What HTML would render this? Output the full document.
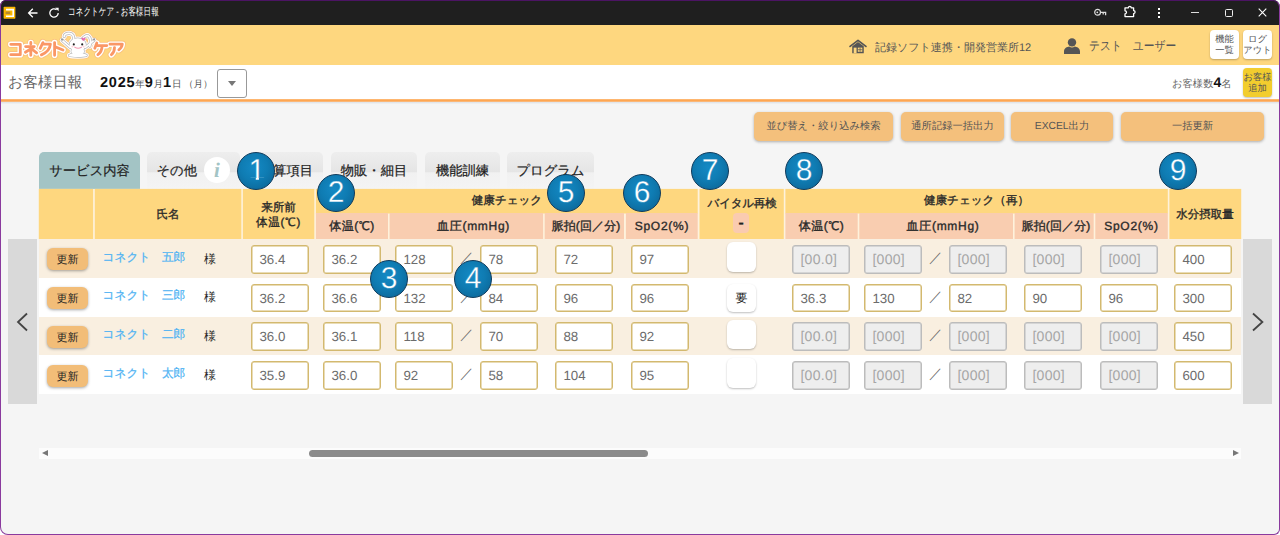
<!DOCTYPE html>
<html lang="ja">
<head>
<meta charset="utf-8">
<title>コネクトケア - お客様日報</title>
<style>
*{box-sizing:border-box;margin:0;padding:0}
html,body{width:1280px;height:535px;overflow:hidden;background:#fff}
body{font-family:"Liberation Sans",sans-serif;color:#222;position:relative;text-rendering:geometricPrecision}
#win{position:absolute;left:0;top:0;width:1280px;height:535px;overflow:hidden;background:#f5f5f5}
#frame{position:absolute;left:0;top:0;width:1280px;height:535px;border:1px solid #8a3a9e;border-top-color:#4b1463;border-radius:6px 7px 6px 8px;box-shadow:0 0 0 12px #fff;z-index:50}
.abs,#win div,#win span{position:absolute;white-space:nowrap}
#titlebar{left:0;top:0;width:1280px;height:25px;background:#1f1f1f}
#header{left:0;top:25px;width:1280px;height:40px;background:#fed77f}
#sub{left:0;top:65px;width:1280px;height:35px;background:#fff}
#oline{left:0;top:98px;width:1280px;height:6px;background:linear-gradient(#fff 0,#fff 14%,#feb873 24%,#fea652 36%,#fea652 54%,#f6c9a0 63%,#e0e4e9 72%,#e8eaed 86%,#f5f5f5 100%)}
.btn{background:#f4c07c;border-radius:5px;box-shadow:0 1px 3px rgba(0,0,0,.3);font-size:10.3px;color:#555;text-align:center;line-height:30px;height:29px;top:112px}
.tab{top:152px;height:37px;border-radius:5px 5px 0 0;font-size:13.3px;line-height:37px;text-align:center;color:#222;background:linear-gradient(#eee 0,#e5e5e5 54%,#f1f1f1 56%,#f4f4f4 100%);-webkit-text-stroke:.2px #222}
.th{font-size:11.55px;font-weight:normal;-webkit-text-stroke:.35px #2a2a2a;color:#2a2a2a;text-align:center}
.sh{font-size:12px;letter-spacing:.5px;font-weight:normal;-webkit-text-stroke:.35px #2a2a2a;color:#2a2a2a;text-align:center;top:213px;height:26px;line-height:27px}
.row{left:39px;width:1202px;height:39px}
.odd{background:#f9efe0}
.even{background:#fff}
.upd{left:47px;width:41px;height:22px;background:#f2bd78;border-radius:6px;box-shadow:0 1px 3px rgba(0,0,0,.35);font-size:11px;line-height:24.6px;text-align:center;color:#222}
.nm{font-size:11.66px;color:#4fb3f3;-webkit-text-stroke:.25px #4fb3f3}
.sama{font-size:12px;color:#222}
.in{width:58px;height:28.75px;background:#fff;border:1px solid #d3b96f;box-shadow:inset 0 0 0 .5px #d3b96f;border-radius:3px;font-size:13.3px;color:#6c6c6c;line-height:27px;padding-left:7.4px}
.dis{background:#eee;border-color:#bcbcbc;box-shadow:inset 0 0 0 .5px #bcbcbc;color:#a6a6a6;font-size:14px;letter-spacing:.3px}
.sl{font-size:13.5px;color:#666}
.circ{width:38px;height:38px;border-radius:50%;background:radial-gradient(circle at 45% 40%,#1489c4 0,#0f7cb3 45%,#0b5f8e 100%);border:1.5px solid #0d3a5c;color:#fff;font-size:30px;line-height:35px;text-align:center;z-index:20;-webkit-text-stroke:.35px #1184bc}
.chk{width:29px;height:29px;background:#fff;border-radius:6px;box-shadow:0 1px 2px rgba(0,0,0,.25)}
.nav{background:#d9d9d9;top:239px;height:165px;width:29px}
</style>
</head>
<body>
<div id="win">
<div id="titlebar"></div>
<div id="header"></div>
<div id="sub"></div>
<div id="oline"></div>
<div style="left:68px;top:6px;font-size:10.6px;color:#fff;line-height:13px;transform:scaleX(.71);transform-origin:0 0">コネクトケア - お客様日報</div>
<svg style="position:absolute;left:3px;top:5.6px" width="14" height="14" viewBox="0 0 14 14"><rect x="0.1" y="0.3" width="12.8" height="12.9" rx="1" fill="#101a30"/><rect x="0.6" y="0.8" width="11.8" height="11.9" rx=".6" fill="#f9b700"/><path d="M3 3.6 H10.2 V10.2 H3" fill="none" stroke="#fff" stroke-width="1.6"/><rect x="2.6" y="5.6" width="4.6" height="2.4" fill="#b98a2a"/></svg>
<svg style="position:absolute;left:27.3px;top:6.5px" width="12" height="12" viewBox="0 0 12 12"><path d="M10.5 6 H1.8 M5.8 1.8 L1.6 6 L5.8 10.2" fill="none" stroke="#fff" stroke-width="1.3"/></svg>
<svg style="position:absolute;left:48.3px;top:6.5px" width="12" height="12" viewBox="0 0 12 12"><path d="M10.2 6 A4.2 4.2 0 1 1 8.6 2.7" fill="none" stroke="#fff" stroke-width="1.3"/><path d="M7.2 0.8 H10.6 V4.2 Z" fill="#fff"/></svg>
<svg style="position:absolute;left:1094px;top:8px" width="13" height="9" viewBox="0 0 13 9"><circle cx="3.6" cy="4.3" r="2.9" fill="none" stroke="#ddd" stroke-width="1.2"/><path d="M6.5 4.3 H11.6 V7.2 M9.2 4.3 V6.6" fill="none" stroke="#ddd" stroke-width="1.3"/><circle cx="3.3" cy="4.3" r="0.9" fill="#ddd"/></svg>
<svg style="position:absolute;left:1123px;top:5px" width="14" height="13" viewBox="0 0 14 13"><path d="M2 2.8 H5.4 A1.4 1.4 0 0 1 8.2 2.8 H10.6 V5.6 A1.5 1.5 0 0 1 10.6 8.6 V11.6 H2 V8.8 A1.4 1.4 0 0 0 2 5.8 Z" fill="none" stroke="#fff" stroke-width="1.3" stroke-linejoin="round"/></svg>
<div style="left:1158px;top:8px;width:2px;height:2px;background:#fff"></div><div style="left:1158px;top:12px;width:2px;height:2px;background:#fff"></div><div style="left:1158px;top:16px;width:2px;height:2px;background:#fff"></div>
<div style="left:1191px;top:12px;width:8px;height:1px;background:#ddd"></div>
<div style="left:1225px;top:9px;width:8px;height:8px;border:1px solid #eee;border-radius:1.5px"></div>
<svg style="position:absolute;left:1258px;top:8px" width="9" height="9" viewBox="0 0 9 9"><path d="M0.7 0.7 L8.3 8.3 M8.3 0.7 L0.7 8.3" stroke="#fff" stroke-width="1.1"/></svg>
<svg style="position:absolute;left:849px;top:38.8px" width="18" height="15.3" viewBox="0 0 20 17"><path d="M1.2 8.2 L10 1.6 L18.8 8.2" fill="none" stroke="#555" stroke-width="1.9" stroke-linejoin="round" stroke-linecap="round"/><path d="M3.6 8 V15.8 H16.4 V8 L10 3.4 Z" fill="#555"/><rect x="5.2" y="9.6" width="3.2" height="6.2" fill="#fed77f"/><rect x="9.8" y="9.6" width="5" height="4.6" fill="#fed77f"/><path d="M12.3 9.6 V14.2 M9.8 11.9 H14.8" stroke="#555" stroke-width=".8"/></svg>
<svg style="position:absolute;left:1063px;top:37px" width="18" height="18" viewBox="0 0 18 18"><circle cx="9" cy="5.4" r="4.2" fill="#555"/><path d="M1 17 V14.5 C1 11.2 4.2 10 6.2 9.6 C8 10.8 10 10.8 11.8 9.6 C13.8 10 17 11.2 17 14.5 V17 Z" fill="#555"/></svg>
<svg style="position:absolute;left:0;top:25px" width="135" height="40" viewBox="0 25 135 40">
<defs>
<g id="lt" fill="none" stroke-linecap="round" stroke-linejoin="round">
<path d="M10.8 44.3 H20.3 V54.7 H10.8"/>
<path d="M30.8 42.5 V43.9 M25.6 46.6 H34.2 L25.4 52.2 M30.8 50.2 V55.3 M33 50 L36.6 52.8"/>
<path d="M42.9 42.6 L40.2 48.3 M43 44.2 H50.4 C50 49 47 52.5 41.4 54.9"/>
<path d="M54.6 42.6 V55.3 M54.6 46.6 L63 50"/>
<path d="M96.8 43 L94.8 48.3 M97.2 45.6 H106.8 M102.1 45.9 C102 50 100.8 52.6 97.9 54.6"/>
<path d="M110 44.2 H122.3 C122 46.6 120.8 48.4 118.8 49.8 M114.5 47.6 C114.5 50.8 113.6 53 111.4 54.7"/>
</g>
<g id="rb" stroke-linecap="round" stroke-linejoin="round">
<path d="M73.6 40.5 C74.2 36 72.8 33.6 69.4 33.4 C66 33.2 64.2 34.6 64.2 36.4" fill="none"/>
<path d="M81.6 40 C84 36.2 87 34.8 88.6 36.2 C90.4 37.8 91 42 89.8 46.2" fill="none"/>
<path d="M70.2 47.4 L62.2 40.4 M85.4 47.4 L94 40.4" fill="none"/>
<ellipse cx="77.7" cy="44.8" rx="7.4" ry="5.8"/>
<ellipse cx="77.7" cy="51.2" rx="5.6" ry="3.4"/>
<path d="M69.5 55.4 C72 53.6 75 54.2 77.7 54.6 C80.4 54.2 83.4 53.6 86.2 55.4 C83 56.4 72.5 56.4 69.5 55.4 Z"/>
</g>
</defs>
<use href="#lt" stroke="#f9b27c" stroke-width="7.2" opacity=".55"/>
<use href="#rb" stroke="#f9b27c" stroke-width="6.4" fill="#f9b27c" opacity=".55"/>
<use href="#lt" stroke="#fff" stroke-width="5.6"/>
<use href="#rb" stroke="#fff" stroke-width="5" fill="#fff"/>
<use href="#rb" stroke="#b9b9b9" stroke-width="3.1" fill="#fff"/>
<use href="#rb" stroke="#fff" stroke-width="1.7" fill="#fff"/>
<use href="#lt" stroke="#fa9766" stroke-width="2.8"/>
<path d="M62.2 40.4 l-0.9 -1.6 l1.9 0.4 Z M94 40.4 l0.9 -1.6 l-1.9 0.4 Z" fill="#999" stroke="#999" stroke-width="1"/>
<circle cx="73.8" cy="44.4" r="1.05" fill="#222"/><circle cx="82.2" cy="44.4" r="1.05" fill="#222"/>
<path d="M74.8 47.2 Q78 49.2 81.4 47.2" fill="none" stroke="#f49ab0" stroke-width="1.1" stroke-linecap="round"/>
<circle cx="72.4" cy="46.6" r="1" fill="#fbd3d8"/><circle cx="83.6" cy="46.6" r="1" fill="#fbd3d8"/>
<path d="M83.3 41 C81.4 39.6 80.8 38.4 81.6 37.8 C82.4 37.3 83 37.8 83.3 38.4 C83.6 37.8 84.4 37.3 85.2 37.8 C86 38.6 85.2 39.8 83.3 41 Z" fill="#e56fb0"/>
</svg>
<div style="left:875px;top:39.8px;font-size:11.03px;color:#555;line-height:16px">記録ソフト連携・開発営業所12</div>
<div style="left:1089px;top:38px;font-size:12.5px;color:#555;line-height:16px;transform:scaleX(.86);transform-origin:0 0">テスト　ユーザー</div>
<div style="left:1210px;top:30px;width:29px;height:29px;background:#fff;border-radius:4px;box-shadow:0 1px 2px rgba(0,0,0,.25);font-size:9.3px;line-height:11.5px;text-align:center;padding-top:3.5px;color:#555">機能<br>一覧</div>
<div style="left:1243px;top:30px;width:29px;height:29px;background:#fff;border-radius:4px;box-shadow:0 1px 2px rgba(0,0,0,.25);font-size:9.3px;line-height:11.5px;text-align:center;padding-top:3.5px;color:#555">ログ<br>アウト</div>
<div style="left:8px;top:72.8px;font-size:14.8px;color:#666;line-height:20px">お客様日報</div>
<div style="left:100px;top:73px;font-size:14px;color:#111;line-height:18px"><b style="position:static;font-size:14.5px;letter-spacing:.75px">2025</b><span style="position:static;font-size:9.5px;color:#555">年</span><b style="position:static;font-size:14.5px;letter-spacing:.75px">9</b><span style="position:static;font-size:9.5px;color:#555">月</span><b style="position:static;font-size:14.5px;letter-spacing:.75px">1</b><span style="position:static;font-size:9.5px;color:#555">日 （月）</span></div>
<div style="left:217px;top:69px;width:30px;height:29px;background:#fff;border:1px solid #999;border-radius:3px"></div>
<div style="left:227.8px;top:81.2px;width:0;height:0;border-left:4.3px solid transparent;border-right:4.3px solid transparent;border-top:5.4px solid #777"></div>
<div style="left:1172px;top:73.5px;font-size:10.3px;color:#666;line-height:16px">お客様数<b style="position:static;font-size:14px;color:#111">4</b>名</div>
<div style="left:1243px;top:68px;width:29px;height:29px;background:#f2cd2e;border-radius:4px;box-shadow:0 1px 2px rgba(0,0,0,.25);font-size:9.3px;line-height:11.5px;text-align:center;padding-top:3.5px;color:#555">お客様<br>追加</div>
<div class="btn" style="left:754px;width:139px">並び替え・絞り込み検索</div>
<div class="btn" style="left:901px;width:103px">通所記録一括出力</div>
<div class="btn" style="left:1011px;width:102px">EXCEL出力</div>
<div class="btn" style="left:1121px;width:143px">一括更新</div>
<div class="tab" style="left:39px;width:101px;background:#a3c4c5;">サービス内容</div>
<div class="tab" style="left:147px;width:93px;text-align:left;padding-left:9.5px">その他</div>
<div class="tab" style="left:248px;width:75px;text-align:right;padding-right:10px">加算項目</div>
<div class="tab" style="left:331px;width:86px;">物販・細目</div>
<div class="tab" style="left:425px;width:75px;">機能訓練</div>
<div class="tab" style="left:507px;width:87px;">プログラム</div>
<div style="left:204px;top:157px;width:26px;height:26px;border-radius:50%;background:#fff"></div>
<div style="left:204px;top:157px;width:26px;height:26px;font-family:'Liberation Serif',serif;font-style:italic;font-weight:bold;font-size:21px;line-height:26px;text-align:center;color:#a3c4c5">i</div>
<svg style="position:absolute;left:0;top:0" width="1280" height="260" viewBox="0 0 1280 260"><rect x="38.8" y="188.9" width="1202.4" height="50.2" fill="#fef2dc"/><rect x="38.8" y="188.9" width="54.3" height="50.2" fill="#fed77f"/><rect x="94.8" y="188.9" width="146.5" height="50.2" fill="#fed77f"/><rect x="242.9" y="188.9" width="71.4" height="50.2" fill="#fed77f"/><rect x="699.5" y="188.9" width="84.3" height="50.2" fill="#fed77f"/><rect x="1169.4" y="188.9" width="71.8" height="50.2" fill="#fed77f"/><rect x="315.9" y="188.9" width="381.8" height="24.6" fill="#fed77f"/><rect x="785.4" y="188.9" width="382.4" height="24.6" fill="#fed77f"/><rect x="315.9" y="213.0" width="72.1" height="26.1" fill="#f9cdb0"/><rect x="389.6" y="213.0" width="153.5" height="26.1" fill="#f9cdb0"/><rect x="544.7" y="213.0" width="79.3" height="26.1" fill="#f9cdb0"/><rect x="625.9" y="213.0" width="71.8" height="26.1" fill="#f9cdb0"/><rect x="785.4" y="213.0" width="72.3" height="26.1" fill="#f9cdb0"/><rect x="859.3" y="213.0" width="153.7" height="26.1" fill="#f9cdb0"/><rect x="1014.6" y="213.0" width="79.1" height="26.1" fill="#f9cdb0"/><rect x="1095.3" y="213.0" width="72.5" height="26.1" fill="#f9cdb0"/></svg>
<div class="th" style="left:95px;width:146px;top:189px;height:50px;line-height:52px">氏名</div>
<div class="th" style="left:243px;width:71px;top:189px;height:50px;line-height:14.4px;padding-top:12.2px">来所前<br><span style="position:static;letter-spacing:.7px">体温(℃)</span></div>
<div class="th" style="left:316px;width:382px;top:189px;height:24px;line-height:25px">健康チェック</div>
<div class="th" style="left:700px;width:84px;top:189px;height:50px;line-height:17px;padding-top:7.3px;letter-spacing:-.25px">バイタル再検</div>
<div class="th" style="left:785px;width:383px;top:189px;height:24px;line-height:25px">健康チェック（再）</div>
<div class="th" style="left:1169px;width:72px;top:189px;height:50px;line-height:53.4px">水分摂取量</div>
<div class="sh" style="left:316px;width:72px;">体温(℃)</div>
<div class="sh" style="left:390px;width:153px;padding-left:14px;letter-spacing:.7px;">血圧(mmHg)</div>
<div class="sh" style="left:545px;width:79px;padding-left:3px;letter-spacing:.1px;">脈拍(回／分)</div>
<div class="sh" style="left:626px;width:72px;letter-spacing:.75px;">SpO2(%)</div>
<div class="sh" style="left:785px;width:73px;">体温(℃)</div>
<div class="sh" style="left:859px;width:154px;padding-left:14px;letter-spacing:.7px;">血圧(mmHg)</div>
<div class="sh" style="left:1015px;width:79px;padding-left:3px;letter-spacing:.1px;">脈拍(回／分)</div>
<div class="sh" style="left:1095px;width:73px;letter-spacing:.75px;">SpO2(%)</div>
<div style="left:733px;top:213px;width:16px;height:20px;background:#facbb0;border-radius:4px;font-size:17px;font-weight:bold;line-height:19px;text-align:center;color:#222">-</div>
<div class="nav" style="left:8px;width:29px"></div>
<div class="nav" style="left:1243px"></div>
<svg style="position:absolute;left:16px;top:312px" width="13" height="20" viewBox="0 0 13 20"><path d="M11 1.5 L2 10 L11 18.5" fill="none" stroke="#444" stroke-width="1.8"/></svg>
<svg style="position:absolute;left:1250.6px;top:312.4px" width="13" height="20" viewBox="0 0 13 20"><path d="M2 1.5 L11.4 10 L2 18.5" fill="none" stroke="#444" stroke-width="1.8"/></svg>
<div class="row odd" style="top:239px"></div>
<div class="upd" style="top:248px">更新</div>
<div class="nm" style="left:102.6px;top:249.70px;line-height:16px">コネクト　五郎</div>
<div class="sama" style="left:204px;top:250.50px;line-height:16px">様</div>
<div class="in" style="left:251px;top:244.75px">36.4</div>
<div class="in" style="left:323px;top:244.75px">36.2</div>
<div class="in" style="left:395px;top:244.75px">128</div>
<div class="in" style="left:480px;top:244.75px">78</div>
<div class="in" style="left:555px;top:244.75px">72</div>
<div class="in" style="left:631px;top:244.75px">97</div>
<div class="sl" style="left:460px;top:247.75px;line-height:20px">／</div>
<div class="chk" style="left:727px;top:242px;height:29.5px"></div>
<div class="in dis" style="left:792px;top:244.75px">[00.0]</div>
<div class="in dis" style="left:864px;top:244.75px">[000]</div>
<div class="in dis" style="left:949px;top:244.75px">[000]</div>
<div class="in dis" style="left:1024px;top:244.75px">[000]</div>
<div class="in dis" style="left:1100px;top:244.75px">[000]</div>
<div class="sl" style="left:929px;top:247.75px;line-height:20px">／</div>
<div class="in" style="left:1174px;top:244.75px">400</div>
<div class="row even" style="top:277.75px"></div>
<div class="upd" style="top:287px">更新</div>
<div class="nm" style="left:102.6px;top:288.45px;line-height:16px">コネクト　三郎</div>
<div class="sama" style="left:204px;top:289.25px;line-height:16px">様</div>
<div class="in" style="left:251px;top:283.5px">36.2</div>
<div class="in" style="left:323px;top:283.5px">36.6</div>
<div class="in" style="left:395px;top:283.5px">132</div>
<div class="in" style="left:480px;top:283.5px">84</div>
<div class="in" style="left:555px;top:283.5px">96</div>
<div class="in" style="left:631px;top:283.5px">96</div>
<div class="sl" style="left:460px;top:286.5px;line-height:20px">／</div>
<div class="chk" style="left:727px;top:283.5px;height:28.5px;font-size:12px;line-height:28px;text-align:center;color:#222">要</div>
<div class="in" style="left:792px;top:283.5px">36.3</div>
<div class="in" style="left:864px;top:283.5px">130</div>
<div class="in" style="left:949px;top:283.5px">82</div>
<div class="in" style="left:1024px;top:283.5px">90</div>
<div class="in" style="left:1100px;top:283.5px">96</div>
<div class="sl" style="left:929px;top:286.5px;line-height:20px">／</div>
<div class="in" style="left:1174px;top:283.5px">300</div>
<div class="row odd" style="top:316.5px"></div>
<div class="upd" style="top:326px">更新</div>
<div class="nm" style="left:102.6px;top:327.20px;line-height:16px">コネクト　二郎</div>
<div class="sama" style="left:204px;top:328.00px;line-height:16px">様</div>
<div class="in" style="left:251px;top:322.25px">36.0</div>
<div class="in" style="left:323px;top:322.25px">36.1</div>
<div class="in" style="left:395px;top:322.25px">118</div>
<div class="in" style="left:480px;top:322.25px">70</div>
<div class="in" style="left:555px;top:322.25px">88</div>
<div class="in" style="left:631px;top:322.25px">92</div>
<div class="sl" style="left:460px;top:325.25px;line-height:20px">／</div>
<div class="chk" style="left:727px;top:319.5px;height:29.5px"></div>
<div class="in dis" style="left:792px;top:322.25px">[00.0]</div>
<div class="in dis" style="left:864px;top:322.25px">[000]</div>
<div class="in dis" style="left:949px;top:322.25px">[000]</div>
<div class="in dis" style="left:1024px;top:322.25px">[000]</div>
<div class="in dis" style="left:1100px;top:322.25px">[000]</div>
<div class="sl" style="left:929px;top:325.25px;line-height:20px">／</div>
<div class="in" style="left:1174px;top:322.25px">450</div>
<div class="row even" style="top:355.25px"></div>
<div class="upd" style="top:365px">更新</div>
<div class="nm" style="left:102.6px;top:365.95px;line-height:16px">コネクト　太郎</div>
<div class="sama" style="left:204px;top:366.75px;line-height:16px">様</div>
<div class="in" style="left:251px;top:361.0px">35.9</div>
<div class="in" style="left:323px;top:361.0px">36.0</div>
<div class="in" style="left:395px;top:361.0px">92</div>
<div class="in" style="left:480px;top:361.0px">58</div>
<div class="in" style="left:555px;top:361.0px">104</div>
<div class="in" style="left:631px;top:361.0px">95</div>
<div class="sl" style="left:460px;top:364.0px;line-height:20px">／</div>
<div class="chk" style="left:727px;top:358.25px;height:29.5px"></div>
<div class="in dis" style="left:792px;top:361.0px">[00.0]</div>
<div class="in dis" style="left:864px;top:361.0px">[000]</div>
<div class="in dis" style="left:949px;top:361.0px">[000]</div>
<div class="in dis" style="left:1024px;top:361.0px">[000]</div>
<div class="in dis" style="left:1100px;top:361.0px">[000]</div>
<div class="sl" style="left:929px;top:364.0px;line-height:20px">／</div>
<div class="in" style="left:1174px;top:361.0px">600</div>
<div class="circ" style="left:237px;top:152px"><span style="position:static;display:inline-block;line-height:35px;clip-path:polygon(0 0,100% 0,100% 71.2%,62.5% 71.2%,62.5% 100%,44% 100%,44% 71.2%,0 71.2%);transform:translateX(.8px)">1</span></div>
<div class="circ" style="left:317px;top:174px">2</div>
<div class="circ" style="left:370px;top:260px">3</div>
<div class="circ" style="left:454px;top:260px">4</div>
<div class="circ" style="left:547px;top:174px">5</div>
<div class="circ" style="left:623px;top:174px">6</div>
<div class="circ" style="left:691px;top:152px">7</div>
<div class="circ" style="left:785px;top:152px">8</div>
<div class="circ" style="left:1159px;top:152px">9</div>
<div style="left:39px;top:448px;width:1202px;height:11px;background:#fcfcfc"></div>
<div style="left:309px;top:450px;width:339px;height:7px;background:#8b8b8b;border-radius:4px"></div>
<div style="left:41.5px;top:450.3px;width:0;height:0;border-top:3.8px solid transparent;border-bottom:3.8px solid transparent;border-right:6.2px solid #777"></div>
<div style="left:1232.5px;top:450.3px;width:0;height:0;border-top:3.8px solid transparent;border-bottom:3.8px solid transparent;border-left:6.2px solid #777"></div>
</div>
<div id="frame"></div>
</body>
</html>
